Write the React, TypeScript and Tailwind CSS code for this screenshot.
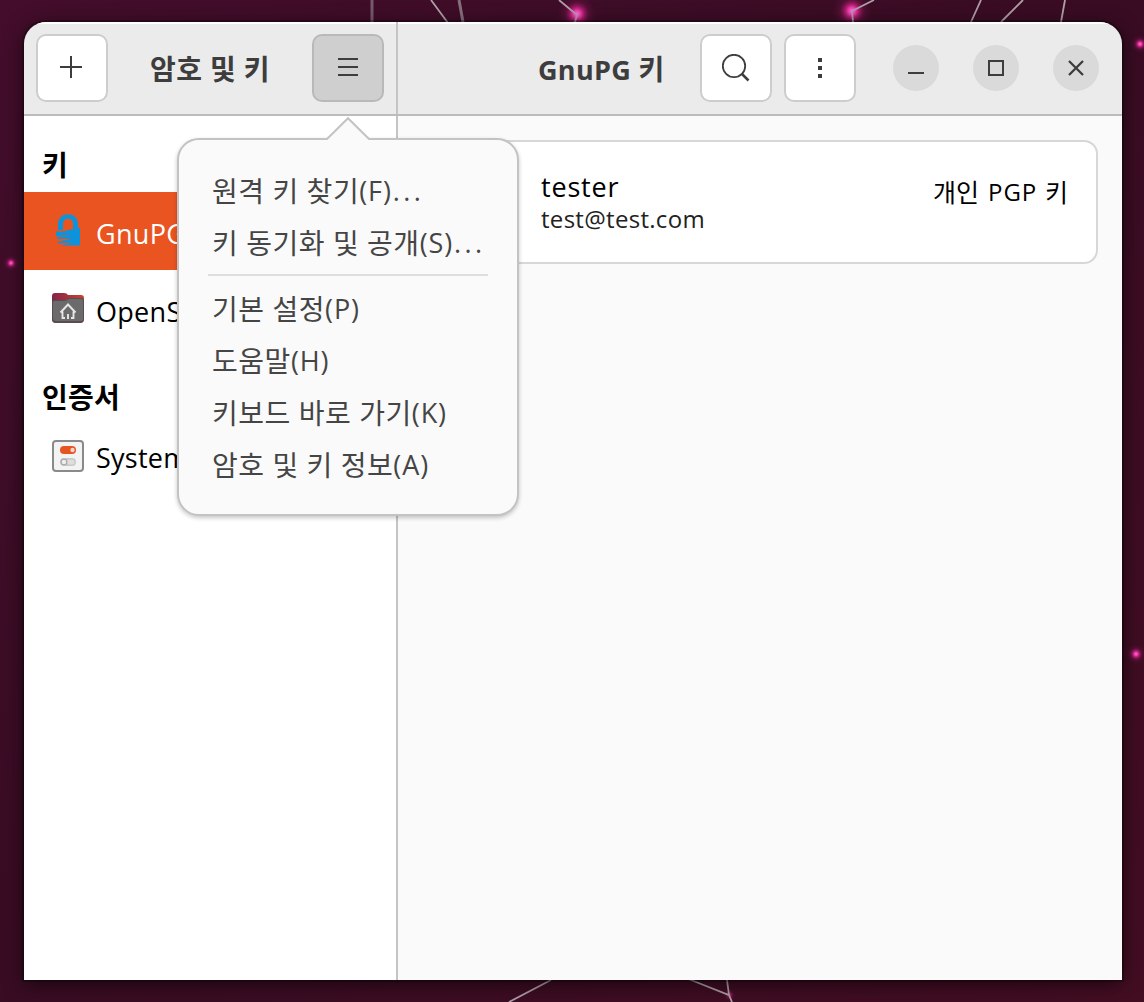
import type { ReactNode } from 'react';

const headerButton =
  'flex h-[68px] w-[72px] shrink-0 items-center justify-center rounded-[10px] border-2 text-[#3d3d3d]';

function Wallpaper() {
  const glows = [
    { x: 577, y: 14, r: 20 },
    { x: 852, y: 11, r: 20 },
    { x: 1140, y: 44, r: 9 },
    { x: 11, y: 263, r: 8 },
    { x: 1136, y: 654, r: 10 },
  ];
  return (
    <svg className="absolute inset-0" width="1144" height="1002" viewBox="0 0 1144 1002">
      <defs>
        <radialGradient id="glow">
          <stop offset="0" stopColor="#ff7ae0" />
          <stop offset="0.18" stopColor="#f23bb0" />
          <stop offset="0.36" stopColor="#c31f7c" stopOpacity="0.75" />
          <stop offset="0.6" stopColor="#8d1759" stopOpacity="0.3" />
          <stop offset="1" stopColor="#5c1040" stopOpacity="0" />
        </radialGradient>
      </defs>
      {glows.map((g) => (
        <circle key={g.x} cx={g.x} cy={g.y} r={g.r} fill="url(#glow)" />
      ))}
      <circle cx="629.500" cy="995" r="0" />
      <circle cx="729.500" cy="995" r="7" fill="url(#glow)" opacity="0.5" />
      <g stroke="#b0a0a8" strokeWidth="1.8" fill="none">
        <path d="M372 0V22" stroke="#77596a" strokeWidth="3" />
        <path d="M431 0L448 23M559 0L577 15L575 22M874 0L852 11L853 22M981 0L971 22M1023 0L1001 22M1065 0L1061 22" />
        <path d="M459 0L463 22" stroke="#85707c" strokeWidth="3" />
        <path d="M551 980L509 1002M686 978L729 995L727 980M729 995L732 1002" />
      </g>
    </svg>
  );
}

function Latin({ className, children }: { className: string; children: ReactNode }) {
  return <span className={className}>{children}</span>;
}

function LockIcon() {
  return (
    <svg className="w-8 shrink-0" height="36" viewBox="0 0 32 36" fill="none">
      <path d="M6 19V13C6 0 26 0 26 13V17L21 18V13C21 6 11 6 11 13V19Z" fill="#0d93dc" />
      <path
        d="M4 20.500L11 20.500L21 18L28 16.500V34.500H9L20 31.500L6 32.500V31L20 27.500L5 28V26.500L19 23.500L4 25.500Z"
        fill="#0d93dc"
      />
    </svg>
  );
}

function HomeFolderIcon() {
  return (
    <svg className="w-8 shrink-0" height="32" viewBox="0 0 32 32" fill="none">
      <defs>
        <linearGradient id="folder">
          <stop stopColor="#842347" />
          <stop offset="1" stopColor="#c84430" />
        </linearGradient>
      </defs>
      <path d="M0 4Q0 1 3 1H12Q15 1 16 3H29Q32 3 32 6V27Q32 31 28 31H4Q0 31 0 27Z" fill="url(#folder)" />
      <path d="M0 10Q0 8 3 8H13L17 6H29Q32 6 32 9V27Q32 31 28 31H4Q0 31 0 27Z" fill="#594c52" />
      <path d="M1 10Q1 9 3 9H13L17 7H29Q31 7 31 9V27Q31 29 28 29H4Q1 29 1 26Z" fill="#6b6b6b" />
      <path
        d="M8.500 20.500L16 12.500L23.500 20.500M10.500 19.500V26H13M21.500 19.500V26H19M16 22V27"
        stroke="#e6e6e6"
        strokeWidth="1.900"
      />
    </svg>
  );
}

function SwitchesIcon() {
  return (
    <svg className="w-8 shrink-0" height="32" viewBox="0 0 32 32" fill="none">
      <rect x="1" y="1" width="30" height="30" rx="3" fill="#f3f3f3" stroke="#8a8a8a" strokeWidth="2" />
      <rect x="8" y="6" width="16" height="8" rx="4" fill="#e65420" />
      <circle cx="20.500" cy="10" r="2.200" fill="#f4d5ca" />
      <rect x="8" y="18" width="16" height="8" rx="4" fill="#c9c9c9" />
      <rect x="15" y="19.500" width="7.500" height="5" rx="2.500" fill="#dedede" />
      <circle cx="12" cy="22" r="2.800" fill="#eee" stroke="#aaa" strokeWidth="1.200" />
    </svg>
  );
}

function MenuItem({ label, mnemonic, ellipsis }: { label: string; mnemonic: string; ellipsis?: boolean }) {
  return (
    <div className="flex h-[52px] items-center whitespace-pre text-[28px] leading-[52px] text-[#454545]">
      <span className="tracking-[0.55px]">{label}</span>
      <Latin className="text-[27px] tracking-[0.9px]">{mnemonic}</Latin>
      {ellipsis && <Latin className="pl-[1px] text-[27px] tracking-[3.4px]">...</Latin>}
    </div>
  );
}

function Popover() {
  return (
    <div className="absolute left-[177px] top-[138px] h-[378px] w-[342px] rounded-[22px] border-2 border-[#c3c3c3] bg-[#fafafa] pl-[29px] pt-[25px] shadow-[0_2px_4px_rgba(0,0,0,0.22)]">
      <svg className="absolute left-[146px] top-[-24px]" width="46" height="25" viewBox="0 0 46 25">
        <path d="M1 25V23L23 2L45 23V25Z" fill="#fafafa" />
        <path d="M1 23H2L23 2.200L44 23H45" fill="none" stroke="#c3c3c3" strokeWidth="2" />
      </svg>
      <div className="pl-[4px]">
        <MenuItem label="원격 키 찾기" mnemonic="(F)" ellipsis />
        <MenuItem label="키 동기화 및 공개" mnemonic="(S)" ellipsis />
      </div>
      <div className="mb-[7px] mt-[5px] h-[2px] w-[280px] bg-[#dedede]" />
      <div className="pl-[4px]">
        <MenuItem label="기본 설정" mnemonic="(P)" />
        <MenuItem label="도움말" mnemonic="(H)" />
        <MenuItem label="키보드 바로 가기" mnemonic="(K)" />
        <MenuItem label="암호 및 키 정보" mnemonic="(A)" />
      </div>
    </div>
  );
}

function Sidebar() {
  return (
    <aside className="w-[374px] shrink-0 overflow-hidden border-r-2 border-[#c4c4c4] bg-white text-[28px] text-black">
      <h2 className="h-[76px] pl-[18px] pt-[9px] leading-[80px] font-bold">키</h2>
      <div className="flex h-[78px] items-center gap-[12px] bg-[#e95420] pl-[28px] text-white">
        <div className="-mt-[4px]"><LockIcon /></div>
        <Latin className="mt-[6px] w-[82px] overflow-hidden whitespace-nowrap text-[27px] tracking-[0.3px]">GnuPG</Latin>
      </div>
      <div className="flex h-[78px] items-center gap-[12px] pl-[28px]">
        <div className="-mt-[3px]"><HomeFolderIcon /></div>
        <Latin className="mt-[6px] w-[82px] overflow-hidden whitespace-nowrap text-[27px] tracking-[0.3px]">OpenSSH</Latin>
      </div>
      <h2 className="h-[69px] pl-[18px] pt-[9px] leading-[80px] font-bold tracking-[0.3px]">인증서</h2>
      <div className="flex h-[78px] items-center gap-[12px] pl-[28px]">
        <SwitchesIcon />
        <Latin className="mt-[4px] w-[82px] overflow-hidden whitespace-nowrap text-[27px] tracking-[0.25px]">System</Latin>
      </div>
    </aside>
  );
}

function Header() {
  return (
    <header className="flex h-[94px] shrink-0 border-b-2 border-[#bcbcbc] bg-[#ebebeb] font-bold text-[#3d3d3d] shadow-[inset_0_2px_0_#fff]">
      <div className="flex w-[374px] shrink-0 items-center justify-between border-r-2 border-[#c4c4c4] px-[12px]">
        <button className={`${headerButton} border-[#cdcdcd] bg-white`}>
          <svg width="24" height="24" viewBox="0 0 24 24">
            <path d="M0 11H22M11 0V22" stroke="currentColor" strokeWidth="2" />
          </svg>
        </button>
        <h1 className="whitespace-nowrap pt-px text-[28px] tracking-[0.4px]">암호 및 키</h1>
        <button className={`${headerButton} border-[#b9b9b9] bg-[#cfcfcf]`}>
          <svg width="20" height="20" viewBox="0 0 20 20">
            <path d="M0 1H20M0 9H20M0 17H20" stroke="currentColor" strokeWidth="2" />
          </svg>
        </button>
      </div>
      <div className="flex grow items-center">
        <h1 className="ml-[140px] w-[162px] shrink-0 whitespace-pre pt-[2px] text-[28px]">
          <Latin className="text-[27px] tracking-[0.3px]">GnuPG </Latin>키
        </h1>
        <button className={`${headerButton} border-[#cdcdcd] bg-white`}>
          <svg width="28" height="28" viewBox="0 0 28 28" fill="none" stroke="currentColor">
            <circle cx="12" cy="12" r="11.200" strokeWidth="1.800" />
            <path d="M19.500 19.500L26.500 26.500" strokeWidth="2.500" />
          </svg>
        </button>
        <button className={`${headerButton} ml-[12px] border-[#cdcdcd] bg-white`}>
          <svg width="4" height="20" viewBox="0 0 4 20" fill="currentColor">
            <path d="M0 0H4V4H0ZM0 8H4V12H0ZM0 16H4V20H0Z" />
          </svg>
        </button>
        <div className="ml-[37px] flex gap-[34px]">
          <button className="flex size-[46px] items-center justify-center rounded-full bg-[#dadada]">
            <svg width="16" height="16" viewBox="0 0 16 16"><path d="M0 13H16" stroke="currentColor" strokeWidth="2" /></svg>
          </button>
          <button className="flex size-[46px] items-center justify-center rounded-full bg-[#dadada]">
            <svg width="16" height="16" viewBox="0 0 16 16"><path d="M1 1H15V15H1Z" fill="none" stroke="currentColor" strokeWidth="2" /></svg>
          </button>
          <button className="flex size-[46px] items-center justify-center rounded-full bg-[#dadada]">
            <svg width="16" height="16" viewBox="0 0 16 16"><path d="M1 1L15 15M15 1L1 15" stroke="currentColor" strokeWidth="2.300" /></svg>
          </button>
        </div>
      </div>
    </header>
  );
}

export default function App() {
  return (
    <div className="relative flex h-[1002px] w-[1144px] overflow-hidden bg-[#3b0d24] bg-linear-to-br from-[#430d2b] via-[#390c23] to-[#430d22] pb-[22px] pl-[24px] pt-[22px] font-['Open_Sans','Noto_Sans_CJK_KR',sans-serif]">
      <Wallpaper />
      <div className="relative flex w-[1098px] shrink-0 flex-col overflow-hidden rounded-t-[22px] shadow-[0_4px_20px_rgba(0,0,0,0.6),0_0_0_2px_rgba(0,0,0,0.25)]">
        <Header />
        <div className="flex grow">
          <Sidebar />
          <main className="grow bg-[#fafafa] pr-[24px] pt-[24px] text-black">
            <div className="ml-[24px] flex h-[124px] items-start justify-between rounded-[14px] border-2 border-[#d7d7d7] bg-white pl-[117px] pr-[28px]">
              <div className="whitespace-nowrap">
                <div className="pt-[27px] text-[27px] leading-[36px] tracking-[0.8px]">tester</div>
                <div className="text-[24px] leading-[28px] tracking-[0.3px] text-[#222]">test@test.com</div>
              </div>
              <div className="flex whitespace-pre pt-[32px] text-[25px] leading-[36px]">
                <span className="w-[55px]">개인</span>
                <Latin className="w-[57px] text-[24px] tracking-[1px]">PGP</Latin>
                <span>키</span>
              </div>
            </div>
          </main>
        </div>
      </div>
      <Popover />
    </div>
  );
}
